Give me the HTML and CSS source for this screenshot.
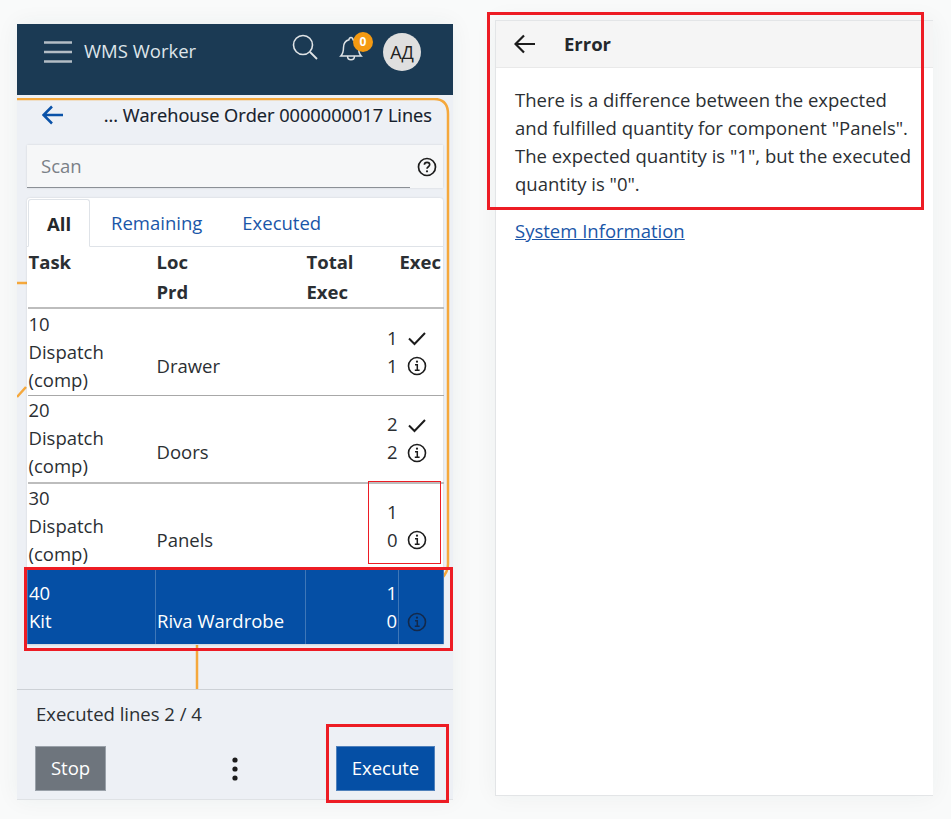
FILE: index.html
```html
<!DOCTYPE html>
<html>
	<head>
		<meta charset="utf-8" />
		<title>WMS Worker</title>
		<link rel="stylesheet" href="styles.css">
	</head>
	<body>
		<div class="phone">
			<header class="top_bar">
				<svg class="menu_icon" width="28" height="22" viewBox="0 0 28 22"><path d="M0 1.500H28M0 11H28M0 20.500H28" stroke="#b4bdc5" stroke-width="2.500" fill="none"/></svg>
				<span class="app_name">WMS Worker</span>
				<svg class="search_icon" width="26" height="26" viewBox="0 0 26 26"><circle cx="11" cy="11" r="9.500" stroke="#dfe3e6" stroke-width="1.600" fill="none"/><path d="M18 18L25 25" stroke="#dfe3e6" stroke-width="1.800"/></svg>
				<div class="bell">
					<svg width="24" height="26" viewBox="0 0 24 26"><path d="M12 1.500a2 2 0 0 1 2 2.200c4 1 5.500 4 5.500 7.800 0 4 .8 6.500 2.700 8.500H1.800c1.900-2 2.700-4.500 2.700-8.500 0-3.800 1.500-6.800 5.500-7.800a2 2 0 0 1 2-2.200zM8.500 20c0 5 7 5 7 0" stroke="#dfe3e6" stroke-width="1.500" fill="none"/></svg>
					<span class="badge">0</span>
				</div>
				<span class="avatar">АД</span>
			</header>

			<div class="lines_page">
				<!-- connectors of the flow behind the screen -->
				<svg class="flow" width="436" height="600" viewBox="0 0 436 600">
					<path d="M0 1H417Q431 1 431 16V466Q431 474 425 480" stroke="#f5a83c" stroke-width="2.500" fill="none"/>
					<path d="M0 185H10M0 299L9 289M180 546V591" stroke="#f5a83c" stroke-width="2.500" fill="none"/>
				</svg>
				<div class="title_row">
					<svg width="22" height="20" viewBox="0 0 22 20"><path d="M21 10H2M10 1.500L1.500 10L10 18.500" stroke="#0a52a8" stroke-width="2.500" fill="none"/></svg>
					<span class="page_title">... Warehouse Order 0000000017 Lines</span>
				</div>
				<div class="scan_box">
					<div class="scan_input">Scan</div>
					<div class="scan_help">
						<svg width="20" height="20" viewBox="0 0 20 20"><circle cx="10" cy="10" r="8.500" stroke="#1c1c1c" stroke-width="1.700" fill="none"/><path d="M7.400 7.800c0-3.300 5.300-3.300 5.300 0 0 2-2.700 1.900-2.700 4" stroke="#1c1c1c" stroke-width="1.600" fill="none"/><circle cx="10" cy="14.300" r="1.100" fill="#1c1c1c"/></svg>
					</div>
				</div>
				<div class="card">
					<div class="tabs">
						<span class="tab tab_active">All</span>
						<span class="tab">Remaining</span>
						<span class="tab">Executed</span>
					</div>
					<table class="lines_table">
						<colgroup>
							<col class="col_task"><col class="col_loc"><col class="col_qty"><col class="col_exec">
						</colgroup>
						<thead>
							<tr>
								<th>Task</th>
								<th>Loc<br>Prd</th>
								<th>Total<br>Exec</th>
								<th>Exec<br>&nbsp;</th>
							</tr>
						</thead>
						<tbody>
							<tr class="row_first">
								<td>10<br>Dispatch<br>(comp)</td>
								<td><br>Drawer</td>
								<td class="num">1<br>1</td>
								<td class="icons">
									<svg class="ico" viewBox="0 0 20 20"><path d="M2 10.500L7.500 16L18 5" stroke="#1c1c1c" stroke-width="2" fill="none"/></svg>
									<svg class="ico" viewBox="0 0 20 20"><circle cx="10" cy="10" r="8.500" stroke="#1c1c1c" stroke-width="1.600" fill="none"/><path d="M8 8.800H10.300V14M7.800 14.200H12.600" stroke="#1c1c1c" stroke-width="1.500" fill="none"/><circle cx="10" cy="5.700" r="1.100" fill="#1c1c1c"/></svg>
								</td>
							</tr>
							<tr class="row_second">
								<td>20<br>Dispatch<br>(comp)</td>
								<td><br>Doors</td>
								<td class="num">2<br>2</td>
								<td class="icons">
									<svg class="ico" viewBox="0 0 20 20"><path d="M2 10.500L7.500 16L18 5" stroke="#1c1c1c" stroke-width="2" fill="none"/></svg>
									<svg class="ico" viewBox="0 0 20 20"><circle cx="10" cy="10" r="8.500" stroke="#1c1c1c" stroke-width="1.600" fill="none"/><path d="M8 8.800H10.300V14M7.800 14.200H12.600" stroke="#1c1c1c" stroke-width="1.500" fill="none"/><circle cx="10" cy="5.700" r="1.100" fill="#1c1c1c"/></svg>
								</td>
							</tr>
							<tr>
								<td>30<br>Dispatch<br>(comp)</td>
								<td><br>Panels</td>
								<td class="num">1<br>0</td>
								<td class="icons">
									<span class="ico"></span>
									<svg class="ico" viewBox="0 0 20 20"><circle cx="10" cy="10" r="8.500" stroke="#1c1c1c" stroke-width="1.600" fill="none"/><path d="M8 8.800H10.300V14M7.800 14.200H12.600" stroke="#1c1c1c" stroke-width="1.500" fill="none"/><circle cx="10" cy="5.700" r="1.100" fill="#1c1c1c"/></svg>
								</td>
							</tr>
							<tr class="row_selected">
								<td>40<br>Kit</td>
								<td><br>Riva Wardrobe</td>
								<td class="num">1<br>0</td>
								<td class="icons">
									<span class="ico"></span>
									<svg class="ico" viewBox="0 0 20 20"><circle cx="10" cy="10" r="8.500" stroke="#14294a" stroke-width="1.600" fill="none"/><path d="M8 8.800H10.300V14M7.800 14.200H12.600" stroke="#14294a" stroke-width="1.500" fill="none"/><circle cx="10" cy="5.700" r="1.100" fill="#14294a"/></svg>
								</td>
							</tr>
						</tbody>
					</table>
				</div>
			</div>

			<footer class="bottom_bar">
				<div class="progress">Executed lines 2 / 4</div>
				<div class="actions">
					<button class="btn btn_stop">Stop</button>
					<svg class="more_icon" width="6" height="24" viewBox="0 0 6 24"><circle cx="3" cy="3" r="2.600" fill="#1c1c1c"/><circle cx="3" cy="12" r="2.600" fill="#1c1c1c"/><circle cx="3" cy="21" r="2.600" fill="#1c1c1c"/></svg>
					<button class="btn btn_execute">Execute</button>
				</div>
			</footer>
		</div>

		<div class="error_panel">
			<div class="error_head">
				<svg width="22" height="20" viewBox="0 0 22 20"><path d="M21 10H2M10 1.500L1.500 10L10 18.500" stroke="#1c1c1c" stroke-width="2.200" fill="none"/></svg>
				<span class="error_title">Error</span>
			</div>
			<div class="error_body">
				<p class="error_text">There is a difference between the expected and fulfilled quantity for component "Panels". The expected quantity is "1", but the executed quantity is "0".</p>
				<a class="error_link" href="#">System Information</a>
			</div>
		</div>

		<!-- annotation boxes drawn over the screenshot -->
		<div class="mark mark_error"></div>
		<div class="mark mark_row"></div>
		<div class="mark mark_execute"></div>
		<div class="mark_thin"></div>
	</body>
</html>
```

FILE: styles.css
```css
* {
	box-sizing: border-box;
}

html, body {
	height: 100%;
	overflow: hidden;
}

body {
	position: relative;
	margin: 0;
	display: flex;
	align-items: flex-start;
	gap: 42px;
	padding-left: 17px;
	background-color: #f9fafa;
	font-family: "Open Sans", "Liberation Sans", sans-serif;
	font-size: 18.5px;
	line-height: 28px;
	color: #2b2f33;
}

.phone {
	width: 436px;
	height: 775px;
	margin-top: 24px;
	display: flex;
	flex-direction: column;
	background-color: #edf0f5;
	box-shadow: 0 0 22px rgba(40, 60, 60, 0.06);
}

.top_bar {
	height: 71px;
	flex: none;
	display: flex;
	align-items: flex-start;
	background-color: #1b3a54;
	color: #dfe5ea;
}

.menu_icon {
	margin: 17px 0 0 27px;
}

.app_name {
	margin: 13px 0 0 12px;
	width: 113px;
	white-space: nowrap;
}

.search_icon {
	margin: 10px 0 0 95px;
}

.bell {
	position: relative;
	width: 24px;
	height: 26px;
	margin: 12px 0 0 21px;
}

.badge {
	position: absolute;
	top: -4px;
	left: 14px;
	width: 20px;
	height: 20px;
	border-radius: 50%;
	background-color: #f59a12;
	color: #fff;
	font-size: 12px;
	font-weight: 700;
	line-height: 20px;
	text-align: center;
}

.avatar {
	width: 38px;
	height: 38px;
	margin: 9px 0 0 20px;
	border-radius: 50%;
	background-color: #dfdfdf;
	color: #222;
	font-size: 18px;
	line-height: 38px;
	text-align: center;
}

.lines_page {
	position: relative;
	flex: 1;
	padding: 0 10px;
}

.flow {
	position: absolute;
	top: 3px;
	left: 0;
}

.title_row {
	position: relative;
	height: 50px;
	display: flex;
	justify-content: space-between;
	align-items: center;
	padding: 0 11px 10px 15px;
	color: #14202c;
}

.page_title {
	font-size: 18.2px;
	white-space: nowrap;
	text-shadow: 0 0 3px #fff;
	-webkit-text-stroke: 0.2px #14202c;
}

.scan_box {
	position: relative;
	height: 43px;
	display: flex;
	background-color: #f6f7f8;
	box-shadow: 0 0 2px rgba(0, 0, 0, 0.12);
}

.scan_input {
	flex: 1;
	padding: 7px 14px;
	border-bottom: 1px solid #8b9096;
	color: #7a8087;
}

.scan_help {
	width: 33px;
	display: flex;
	align-items: center;
	justify-content: center;
}

.card {
	position: relative;
	width: 416px;
	margin-top: 10px;
	background-color: #fff;
	border-radius: 3px 3px 0 0;
	box-shadow: 0 0 2px rgba(0, 0, 0, 0.15);
}

.tabs {
	height: 49px;
	display: flex;
	padding: 1px 0 0 1px;
	border-bottom: 1px solid #dfe3e8;
	color: #1a56a8;
}

.tab {
	padding: 10px 20px 0;
}

.tab_active {
	width: 62px;
	margin: 0 1px -1px 0;
	border: 1px solid #dfe3e8;
	border-bottom: 1px solid #fff;
	border-radius: 3px 3px 0 0;
	padding: 10px 0 0;
	background-color: #fff;
	color: #24282c;
	font-weight: 700;
	text-align: center;
}

.lines_table {
	width: 416px;
	table-layout: fixed;
	border-collapse: collapse;
}

.col_task {
	width: 128px;
}

.col_loc {
	width: 150px;
}

.col_qty {
	width: 93px;
}

.col_exec {
	width: 45px;
}

.lines_table th {
	padding: 0 1px;
	border-bottom: 2px solid #bdbdbd;
	line-height: 30px;
	text-align: left;
	vertical-align: top;
	font-weight: 700;
	color: #2b2f33;
	white-space: nowrap;
}

.lines_table td {
	padding: 0 1px 1px;
	border-bottom: 1px solid #a8a8a8;
	vertical-align: middle;
	white-space: nowrap;
}

.row_first td {
	padding-top: 1px;
}

.row_second td {
	padding-bottom: 2px;
	border-bottom: 2px solid #bdbdbd;
}

.lines_table .num {
	text-align: right;
	padding-right: 1px;
}

.lines_table .icons {
	padding: 4px 0 1px 8px;
}

.ico {
	display: block;
	width: 20px;
	height: 20px;
	margin: 4px 0 8px;
}

.lines_table .row_selected td {
	height: 75px;
	padding-bottom: 0;
	background-color: #054fa5;
	border: 1px solid #3f77b8;
	border-top-color: #6d7b8c;
	border-bottom-color: #d5dbe3;
	color: #fff;
}

.lines_table .row_selected .icons {
	padding-top: 6px;
}

.bottom_bar {
	height: 110px;
	flex: none;
	padding: 10px 18px 0 18px;
	border-top: 1px solid #cdd1d6;
	box-shadow: 0 1px 0 #dfe2e5;
}

.progress {
	padding: 0 0 18px 1px;
	color: #2b2f33;
}

.actions {
	display: flex;
	justify-content: space-between;
	align-items: center;
}

.more_icon {
	margin-left: 28px;
}

.btn {
	height: 45px;
	padding: 0 0 2px;
	border: 1px solid;
	border-radius: 0;
	color: #fff;
	font-family: inherit;
	font-size: 18.5px;
}

.btn_stop {
	width: 71px;
	background-color: #6e757d;
	border-color: #9aa1a9;
}

.btn_execute {
	width: 99px;
	background-color: #054fa5;
	border-color: #4f80bb;
}

.error_panel {
	width: 438px;
	height: 776px;
	margin-top: 20px;
	background-color: #fff;
	border: 1px solid #e3e5e7;
	border-right: 0;
	box-shadow: 0 0 22px rgba(40, 60, 60, 0.05);
}

.error_head {
	height: 47px;
	display: flex;
	align-items: center;
	padding-left: 18px;
	background-color: #f5f5f5;
	border-bottom: 1px solid #e9e9e9;
}

.error_title {
	margin-left: 28px;
	font-weight: 700;
	color: #24282c;
}

.error_body {
	padding: 18px 19px 0 19px;
}

.error_text {
	margin: 0 0 19px;
	color: #2b2f33;
}

.error_link {
	color: #1a56a8;
}

.mark {
	position: absolute;
	border: 3px solid #ed1c24;
}

.mark_error {
	top: 12px;
	left: 487px;
	width: 437px;
	height: 198px;
}

.mark_row {
	top: 567px;
	left: 24px;
	width: 429px;
	height: 84px;
}

.mark_execute {
	top: 724px;
	left: 326px;
	width: 123px;
	height: 79px;
}

.mark_thin {
	position: absolute;
	top: 481px;
	left: 368px;
	width: 73px;
	height: 83px;
	border: 1px solid #ed1c24;
}
```
